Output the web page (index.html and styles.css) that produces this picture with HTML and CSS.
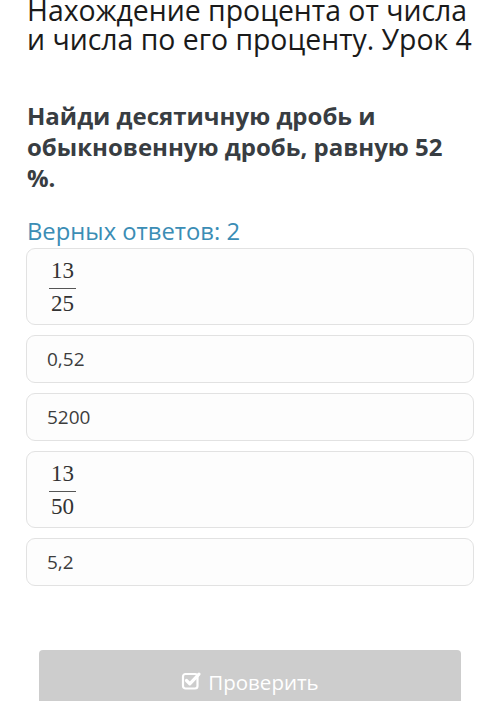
FILE: index.html
```html
<!DOCTYPE html>
<html lang="ru">
<head>
<meta charset="utf-8">
<link rel="stylesheet" href="styles.css">
</head>
<body>
<div class="page">
  <h1 class="title">Нахождение процента от числа и числа по его проценту. Урок 4</h1>
  <h2 class="question">Найди десятичную дробь и обыкновенную дробь, равную 52 %.</h2>
  <div class="hint">Верных ответов: 2</div>
  <div class="options">
    <div class="option frac-opt"><span class="frac"><span class="num">13</span><span class="den">25</span></span></div>
    <div class="option">0,52</div>
    <div class="option">5200</div>
    <div class="option frac-opt"><span class="frac"><span class="num">13</span><span class="den">50</span></span></div>
    <div class="option">5,2</div>
  </div>
  <div class="actions">
    <button class="check">
      <svg class="icon" viewBox="0 0 22 22" width="22" height="22"><rect x="2" y="5" width="14.5" height="14.5" rx="2.5" fill="none" stroke="#fff" stroke-width="2.2"/><path d="M5.5 11.5l3.3 3.3 9.2-9.6" fill="none" stroke="#fff" stroke-width="3.2" stroke-linecap="round" stroke-linejoin="round"/></svg>
      <span>Проверить</span>
    </button>
  </div>
</div>
</body>
</html>
```

FILE: styles.css
```css
html, body {
  margin: 0;
  padding: 0;
  background: #fff;
}
body {
  font-family: "Open Sans", "Noto Sans", sans-serif;
  overflow: hidden;
}
.page {
  padding: 0 26px;
}
.title {
  margin: -4.5px 0 0 0;
  width: 448px;
  font-weight: 400;
  font-size: 28.4px;
  line-height: 29px;
  color: #1a1a1a;
  padding-left: 1px;
}
.question {
  margin: 46px 0 0 0;
  font-weight: 700;
  font-size: 24px;
  line-height: 31px;
  color: #383d42;
  padding-left: 1px;
}
.hint {
  margin-top: 24px;
  font-size: 23.8px;
  line-height: 28px;
  color: #3b8db5;
  padding-left: 1px;
}
.options {
  margin-top: 3px;
  display: flex;
  flex-direction: column;
  gap: 10px;
}
.option {
  border: 1px solid #e2e2e2;
  border-radius: 9px;
  background: #fdfdfd;
  height: 46px;
  display: flex;
  align-items: center;
  padding-left: 20px;
  font-size: 19px;
  color: #3d3d3d;
}
.option.frac-opt {
  height: 75px;
  padding-left: 22px;
}
.frac {
  display: inline-flex;
  flex-direction: column;
  align-items: center;
  font-family: "Liberation Serif", "DejaVu Serif", serif;
  font-size: 23px;
  color: #333;
  line-height: 18px;
  margin-top: 2px;
}
.frac .num {
  padding: 0 2px 8px;
  border-bottom: 1.5px solid #555;
}
.frac .den {
  padding: 6px 2px 0;
}
.actions {
  margin-top: 64px;
  padding: 0 13px;
}
.check {
  width: 100%;
  height: 64px;
  border: none;
  border-radius: 4px 4px 0 0;
  background: #cdcdcd;
  color: #fff;
  font-family: "Open Sans", sans-serif;
  font-size: 20.5px;
  display: flex;
  align-items: center;
  justify-content: center;
  gap: 5px;
  padding: 0;
}
.icon {
  display: block;
  margin-top: -3px;
}
```
